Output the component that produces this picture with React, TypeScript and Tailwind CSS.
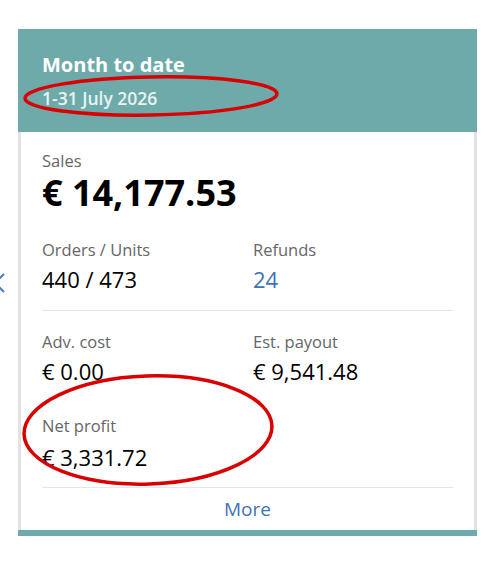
import React from 'react';

function Stat({ label, value, valueClass = 'text-black', gap = 'mt-[4px]' }: { label: string; value: string; valueClass?: string; gap?: string }) {
  return (
    <div className="flex flex-col">
      <span className="text-[16.5px] leading-[22px] text-[#666666]">{label}</span>
      <span className={`${gap} text-[22px] leading-[28px] ${valueClass}`}>{value}</span>
    </div>
  );
}

export default function App() {
  return (
    <div
      className="relative w-[490px] h-[564px] bg-white pt-[29px] pl-[18px] overflow-hidden"
      style={{ fontFamily: '"Open Sans", "Noto Sans", sans-serif' }}
    >
      {/* carousel arrow, mostly off screen */}
      <svg className="absolute left-[-8px] top-[272px]" width="14" height="22" viewBox="0 0 14 22" fill="none">
        <path d="M12 2 L3 11 L12 20" stroke="#4a7fc0" strokeWidth="2" />
      </svg>

      <div className="w-[459px] flex flex-col">
        {/* Header */}
        <div className="h-[103px] bg-[#6eaaaa] pl-[24px] pt-[22px]">
          <div className="text-[20px] leading-[28px] font-bold text-white">Month to date</div>
          <div className="mt-[7px] text-[17.5px] leading-[24px] font-semibold text-[#e6f4f3]">1-31 July 2026</div>
        </div>

        {/* Body */}
        <div className="border-x-[3px] border-[#e2e2e2] bg-white px-[21px]">
          <div className="pt-[19px] flex flex-col">
            <span className="text-[16.5px] leading-[20px] text-[#666666]">Sales</span>
            <span className="mt-[2px] text-[36px] leading-[40px] font-bold text-black">€ 14,177.53</span>
          </div>

          <div className="mt-[26px] grid grid-cols-[211px_1fr] pb-[17px] border-b border-[#e6e6e6]">
            <Stat label="Orders / Units" value="440 / 473" />
            <Stat label="Refunds" value="24" valueClass="text-[#3f73b8]" />
          </div>

          <div className="pt-[20px] grid grid-cols-[211px_1fr]">
            <Stat label="Adv. cost" value="€ 0.00" />
            <Stat label="Est. payout" value="€ 9,541.48" />
          </div>

          <div className="mt-[30px] pb-[16px] border-b border-[#e6e6e6]">
            <Stat label="Net profit" value="€ 3,331.72" gap="mt-[6px]" />
          </div>

          <div className="h-[42px] flex items-center justify-center text-[19px] text-[#3f73b8]">More</div>
        </div>
        <div className="h-[6px] bg-[#6eaaaa]" />
      </div>

      {/* red annotation ellipses */}
      <svg className="absolute left-0 top-0 pointer-events-none" width="490" height="564" viewBox="0 0 490 564" fill="none">
        <ellipse cx="151" cy="96" rx="126" ry="19" stroke="#d80000" strokeWidth="3.5" transform="rotate(-1 151 96)" />
        <ellipse cx="148" cy="430" rx="124" ry="54" stroke="#d80000" strokeWidth="3.5" transform="rotate(-2 148 430)" />
      </svg>
    </div>
  );
}
